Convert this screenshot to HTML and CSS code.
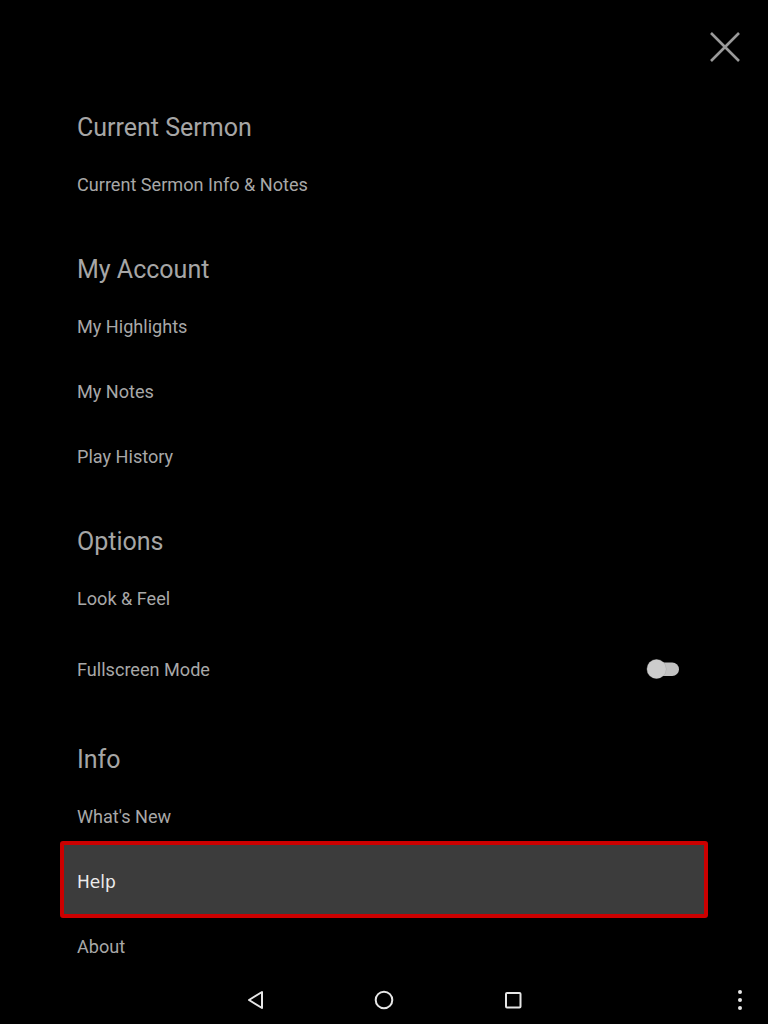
FILE: index.html
```html
<!DOCTYPE html>
<html lang="en">
<head>
  <meta charset="UTF-8">
  <meta name="viewport" content="width=device-width, initial-scale=1.0">
  <title>Menu</title>
  <link rel="stylesheet" href="styles.css">
</head>
<body>
  <div class="screen">
    <!-- Top bar with close button -->
    <div class="top-bar">
      <button class="close-btn" aria-label="Close">
        <svg width="30" height="30" viewBox="0 0 30 30">
          <path d="M1 1 L29 29 M29 1 L1 29" stroke="#9a9a9a" stroke-width="2.6" fill="none"/>
        </svg>
      </button>
    </div>

    <!-- Menu sections -->
    <div class="menu">
      <div class="section">
        <div class="section-title">Current Sermon</div>
        <div class="item">Current Sermon Info &amp; Notes</div>
      </div>

      <div class="section">
        <div class="section-title">My Account</div>
        <div class="item">My Highlights</div>
        <div class="item">My Notes</div>
        <div class="item">Play History</div>
      </div>

      <div class="section">
        <div class="section-title">Options</div>
        <div class="item">Look &amp; Feel</div>
        <div class="item item-tall">
          <span>Fullscreen Mode</span>
          <svg class="toggle" width="34" height="22" viewBox="0 0 34 22">
            <rect x="8" y="4.5" width="25" height="13.5" rx="6.75" fill="#c2c2c2"/>
            <circle cx="10.5" cy="11" r="10" fill="#9a9a9a" opacity="0.5"/>
            <circle cx="10.5" cy="11" r="9.5" fill="#cccccc"/>
          </svg>
        </div>
      </div>

      <div class="section">
        <div class="section-title">Info</div>
        <div class="item">What's New</div>
        <div class="item focused">Help</div>
        <div class="item">About</div>
      </div>
    </div>

    <!-- System navigation bar -->
    <div class="nav-bar">
      <div class="nav-buttons">
        <svg width="20" height="22" viewBox="0 0 20 22">
          <path d="M16 3 L16 19 L3 11 Z" stroke="#e6e6e6" stroke-width="2" fill="none" stroke-linejoin="round"/>
        </svg>
        <svg width="22" height="22" viewBox="0 0 22 22">
          <circle cx="11" cy="11" r="8.3" stroke="#e6e6e6" stroke-width="2" fill="none"/>
        </svg>
        <svg width="22" height="22" viewBox="0 0 22 22">
          <rect x="4" y="4" width="14.5" height="14.5" rx="1" stroke="#e6e6e6" stroke-width="2" fill="none"/>
        </svg>
      </div>
      <svg class="overflow" width="8" height="22" viewBox="0 0 8 22">
        <circle cx="4" cy="3" r="2" fill="#e6e6e6"/>
        <circle cx="4" cy="11" r="2" fill="#e6e6e6"/>
        <circle cx="4" cy="19" r="2" fill="#e6e6e6"/>
      </svg>
    </div>
  </div>
</body>
</html>
```

FILE: styles.css
```css
* {
  margin: 0;
  padding: 0;
  box-sizing: border-box;
}

body {
  background: #000;
  font-family: Roboto, 'Noto Sans', sans-serif;
  color: #aaa;
}

.screen {
  width: 768px;
  height: 1024px;
  display: flex;
  flex-direction: column;
  overflow: hidden;
}

.top-bar {
  height: 75px;
  display: flex;
  justify-content: flex-end;
  align-items: flex-start;
  padding: 32px 28px 0 0;
}

.close-btn {
  background: none;
  border: none;
  width: 30px;
  height: 30px;
  display: flex;
}

.menu {
  flex: 1;
  overflow: hidden;
  padding: 0 77px;
}

.section {
  margin-top: 28px;
}

.section-title {
  height: 49px;
  line-height: 49px;
  font-size: 25px;
  color: #a6a6a6;
}

/* Menu rows */
.item {
  height: 65px;
  display: flex;
  align-items: center;
  justify-content: space-between;
  font-size: 18.1px;
  color: #a8a8a8;
}

.item-tall {
  height: 76px;
}

.toggle {
  margin-right: 11px;
}

/* Focused row with red highlight */
.item.focused {
  height: 77px;
  margin: -8px -17px -4px;
  padding: 4px 13px 0;
  border: 4px solid #cc0000;
  border-radius: 3px;
  background: #3c3c3c;
  color: #ececec;
  font-family: 'DejaVu Sans', sans-serif;
  font-size: 17px;
}

.nav-bar {
  height: 48px;
  display: flex;
  align-items: center;
}

.nav-buttons {
  display: flex;
  align-items: center;
  gap: 107px;
  margin-left: 246px;
}

.overflow {
  margin-left: auto;
  margin-right: 24px;
}
```
